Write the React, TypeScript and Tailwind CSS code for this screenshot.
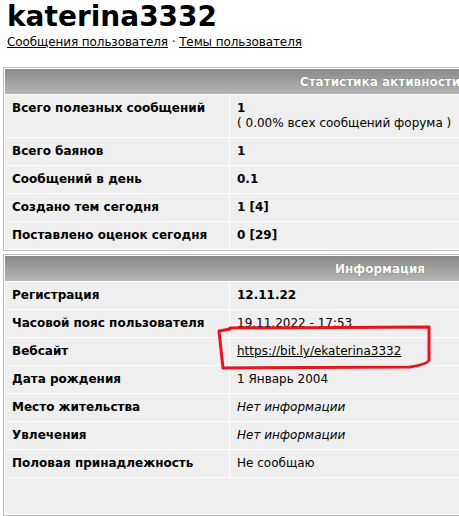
const stats = [
  { label: "Всего полезных сообщений", value: "1", note: "( 0.00% всех сообщений форума )" },
  { label: "Всего баянов", value: "1" },
  { label: "Сообщений в день", value: "0.1" },
  { label: "Создано тем сегодня", value: "1 [4]" },
  { label: "Поставлено оценок сегодня", value: "0 [29]" },
];

type InfoRow = { label: string; value: string; kind?: "bold" | "link" | "italic" | "plain" };

const info: InfoRow[] = [
  { label: "Регистрация", value: "12.11.22", kind: "bold" },
  { label: "Часовой пояс пользователя", value: "19.11.2022 - 17:53", kind: "plain" },
  { label: "Вебсайт", value: "https://bit.ly/ekaterina3332", kind: "link" },
  { label: "Дата рождения", value: "1 Январь 2004", kind: "plain" },
  { label: "Место жительства", value: "Нет информации", kind: "italic" },
  { label: "Увлечения", value: "Нет информации", kind: "italic" },
  { label: "Половая принадлежность", value: "Не сообщаю", kind: "plain" },
];

function Header({ title }: { title: string }) {
  return (
    <div className="h-[25px] flex items-center justify-center bg-gradient-to-b from-[#8a8a8a] to-[#b6b6b6] text-white font-bold text-[12px] [text-shadow:0_0_1px_#555]">
      {title}
    </div>
  );
}

function Row({ label, children }: { label: string; children: React.ReactNode }) {
  return (
    <div className="flex gap-px">
      <div className="w-[224px] shrink-0 bg-[#efefef] px-[7px] py-[6px] font-bold leading-[15px]">
        {label}
      </div>
      <div className="flex-1 bg-[#efefef] px-[7px] py-[6px] leading-[15px]">{children}</div>
    </div>
  );
}

export default function App() {
  return (
    <div className="relative w-[459px] h-[516px] overflow-hidden bg-white text-black font-['DejaVu_Sans',Verdana,sans-serif] text-[12px]">
      <div className="pl-[7px]">
        <h1 className="text-[28px] font-bold leading-[32px] pt-[1px]">katerina3332</h1>
        <div className="text-[12px] leading-[16px] mt-[1px] tracking-[-0.1px]">
          <a href="#" className="underline">Сообщения пользователя</a>
          {" · "}
          <a href="#" className="underline">Темы пользователя</a>
        </div>
      </div>

      <div className="ml-[3px] mt-[17px] w-[754px] border border-[#bbbbbb] bg-white p-px flex flex-col gap-px">
        <Header title="Статистика активности" />
        {stats.map((s) => (
          <Row key={s.label} label={s.label}>
            <div className="font-bold">{s.value}</div>
            {s.note && <div>{s.note}</div>}
          </Row>
        ))}
      </div>

      <div className="ml-[3px] mt-[3px] w-[754px] border border-[#bbbbbb] bg-white p-px flex flex-col gap-px">
        <Header title="Информация" />
        {info.map((r) => (
          <Row key={r.label} label={r.label}>
            {r.kind === "bold" && <span className="font-bold">{r.value}</span>}
            {r.kind === "link" && (
              <a href="#" className="underline">{r.value}</a>
            )}
            {r.kind === "italic" && <span className="italic">{r.value}</span>}
            {r.kind === "plain" && <span>{r.value}</span>}
          </Row>
        ))}
        <div className="h-[36px] bg-[#efefef]" />
      </div>

      <svg
        className="absolute left-0 top-0 pointer-events-none"
        width="459"
        height="516"
        viewBox="0 0 459 516"
      >
        <path
          d="M230 328 L429 327 L429 360 Q428 364 410 367 L223 368 L219 331 L230 329"
          fill="none"
          stroke="#e8141c"
          strokeWidth="3"
          strokeLinejoin="round"
          strokeLinecap="round"
        />
      </svg>
    </div>
  );
}
